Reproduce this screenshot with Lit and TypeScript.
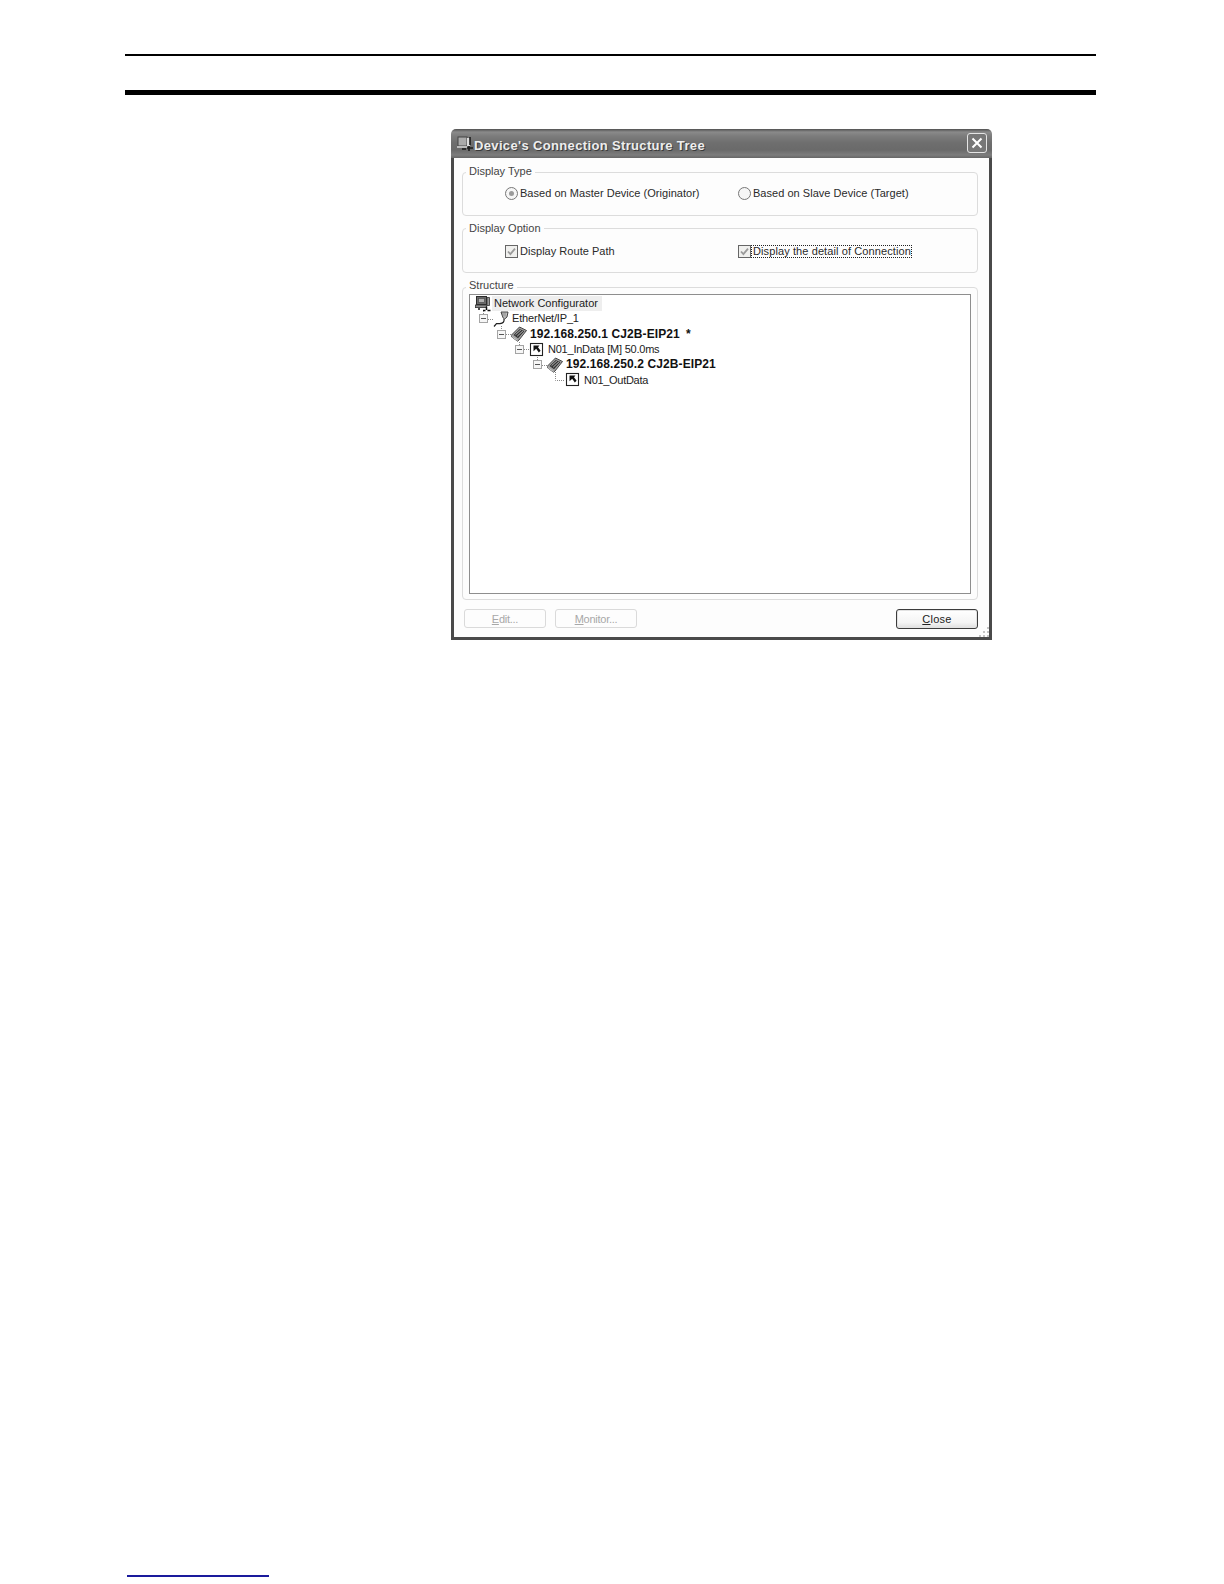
import { LitElement, html, css, svg } from "lit";
import { customElement } from "lit/decorators.js";

const icons = {
  network: svg`<rect x="1.5" y="0.5" width="10" height="8" fill="#6a6a6a" stroke="#2c2c2c"/><rect x="3.5" y="2.5" width="6" height="4" fill="#b4b4b4" stroke="#444" stroke-width=".6"/><rect x="0.5" y="9" width="11" height="2.6" fill="#8e8e8e" stroke="#333" stroke-width=".8"/><path d="M12 1.5h2.5v8H12z" fill="#999" stroke="#333" stroke-width=".8"/><path d="M11.5 10.5v3.5M8 14.5h2.5M12.5 14.5h3M4 12v2" stroke="#111" stroke-width="1.5"/>`,
  ethernet: svg`<path d="M8 1h7l-1 5-2.3 2-1.7-1.2z" fill="#c0c0c0" stroke="#333" stroke-width=".9"/><path d="M11 8c.5 3-1 4.2-4 4.6H3.5L1 15.5" fill="none" stroke="#222" stroke-width="1.2"/><path d="M10 2v3.5M12 2v3.5" stroke="#777" stroke-width=".7"/>`,
  device: svg`<path d="M0 9.5 8.5 1l7 3.5-7.5 9.5-1.5 1.2-6-4.5z" fill="#a4a4a4" stroke="#333" stroke-width=".9"/><path d="M2.5 9 9 2.7l4.5 2.3L7 12.2z" fill="#333"/><path d="M4.5 8.7l6-5.4M6.2 10.2l6-5.6" stroke="#dcdcdc" stroke-width=".8"/><path d="M.8 10.6l5.7 4.1" stroke="#eee" stroke-width=".7"/>`,
  connection: svg`<rect x="1.5" y="1.5" width="12" height="12" fill="#fff" stroke="#222" stroke-width="1.1"/><path d="M4.5 3.5H10.5L9 5.2l2.6 3.6-1.8 1.6-2.6-3.6-2.7 2.4z" fill="#111"/>`,
};

const rows: { level: number; icon: keyof typeof icons; text: string; bold?: boolean; expander?: boolean; selected?: boolean; spacing: number }[] = [
  { level: 0, icon: "network", text: "Network Configurator", selected: true, spacing: 0 },
  { level: 1, icon: "ethernet", text: "EtherNet/IP_1", expander: true, spacing: -0.18 },
  { level: 2, icon: "device", text: "192.168.250.1 CJ2B-EIP21\u2002*", bold: true, expander: true, spacing: 0.1 },
  { level: 3, icon: "connection", text: "N01_InData [M] 50.0ms", expander: true, spacing: -0.23 },
  { level: 4, icon: "device", text: "192.168.250.2 CJ2B-EIP21", bold: true, expander: true, spacing: 0.1 },
  { level: 5, icon: "connection", text: "N01_OutData", spacing: -0.3 },
];

@customElement("app-root")
export class AppRoot extends LitElement {
  static styles = css`
    :host { display: block; width: 1224px; height: 1584px; background: #fff; font-family: "Liberation Sans", Arial, sans-serif; font-size: 11px; color: #2a2a2a; overflow: hidden; }
    .page { display: flex; flex-direction: column; padding-top: 54px; }
    .rule-thin { margin-left: 125px; width: 971px; height: 2px; background: #000; }
    .rule-thick { margin: 34px 0 0 125px; width: 971px; height: 5px; background: #000; }
    .window { position: relative; margin: 34px 0 0 451px; width: 541px; height: 511px; box-sizing: border-box; display: flex; flex-direction: column; background: #fdfdfd; border-radius: 5px 5px 0 0; }
    .title { height: 29px; flex: none; box-sizing: border-box; display: flex; align-items: center; padding: 3px 5px 0 5px; border-radius: 5px 5px 0 0; background: linear-gradient(#505050 0, #8a8a8a 3px, #7c7c7c 7px, #6e6e6e 14px, #6a6a6a 21px, #7d7d7d 26px, #666 29px); }
    .title .logo { width: 18px; height: 18px; flex: none; margin-top: -3px; }
    .title .text { font-size: 13px; font-weight: 700; letter-spacing: .35px; color: #eeeeee; text-shadow: 1px 1px 0 #3a3a3a; white-space: nowrap; flex: 1; }
    .close { width: 20px; height: 20px; box-sizing: border-box; border: 1px solid #e4e4e4; border-radius: 3px; background: #777; display: flex; align-items: center; justify-content: center; margin-top: -4px; }
    .body { flex: 1; min-height: 0; display: flex; flex-direction: column; border: solid #4a4a4a; border-width: 0 3px 3px; padding: 14px 11px 0 8px; }
    .group { position: relative; box-sizing: border-box; border: 1px solid #dcdcdc; border-radius: 4px; flex: none; }
    .g1 { height: 44px; padding: 13.5px 0 0 42px; }
    .g2 { height: 45px; margin-top: 12px; padding: 15.5px 0 0 42px; }
    .g3 { height: 313px; margin-top: 14px; padding: 6px 6px 5px 6px; display: flex; }
    .legend { position: absolute; top: -7px; left: 3px; padding: 0 3px; background: #fdfdfd; line-height: 13px; font-size: 11px; color: #444; }
    .g1 .legend { top: -8px; }
    .g3 .legend { top: -9px; }
    .opts { display: grid; grid-template-columns: 233px 1fr; }
    .opt { display: flex; align-items: center; height: 13px; white-space: nowrap; letter-spacing: .03px; }
    .opt svg { flex: none; width: 13px; height: 13px; }
    .opt .lbl { margin-left: 2px; }
    .opt .focus { outline: 1px dotted #222; outline-offset: 0; margin-left: 1px; padding: 0 0 0 1px; line-height: 11px; letter-spacing: .1px; }
    .tree { position: relative; flex: 1; box-sizing: border-box; border: 1px solid #8e8e8e; background: #fff; padding-top: 1px; }
    .lines { position: absolute; inset: 0; width: 100%; height: 100%; pointer-events: none; }
    .row { position: relative; height: 15.33px; display: flex; align-items: center; white-space: nowrap; color: #222; }
    .exp { width: 9px; height: 9px; margin-left: -14px; margin-right: 5px; flex: none; box-sizing: border-box; border: 1px solid #a4a4a4; background: #f6f6f6; display: flex; align-items: center; justify-content: center; }
    .exp i { display: block; width: 5px; height: 1px; background: #555; }
    .ic { width: 16px; height: 16px; flex: none; }
    .label { margin-left: 3.5px; line-height: 15px; }
    .selected { background: #eeeeee; margin-left: 1.5px; padding: 0 4px 0 2px; }
    .bold { font-weight: 700; font-size: 12px; color: #111; }
    .foot { display: flex; margin-top: 9px; padding-left: 2px; }
    .btn { height: 19px; width: 82px; box-sizing: border-box; border: 1px solid #dadada; border-radius: 3px; display: flex; align-items: center; justify-content: center; color: #a8a8a8; letter-spacing: -.25px; }
    .btn + .btn { margin-left: 9px; }
    .btn.primary { margin-left: auto; height: 20px; width: 82px; border-color: #3c3c3c; color: #222; letter-spacing: .25px; background: linear-gradient(#fff, #f4f4f4 70%, #dedede); box-shadow: inset 0 0 0 1px #e2e2e2; }
    .grip { position: absolute; right: 3px; bottom: 3px; width: 10px; height: 10px; }
    .blue { margin: 935px 0 0 127px; width: 142px; height: 2px; background: #1a1a9c; }
  `;

  private check() {
    return html`<svg viewBox="0 0 13 13"><rect x=".5" y=".5" width="12" height="12" fill="#f0f0ee" stroke="#666"/><path d="M3 6.5l2.4 2.6L10 3.6" fill="none" stroke="#9a9a9a" stroke-width="1.8"/></svg>`;
  }

  private radio(on: boolean) {
    return html`<svg viewBox="0 0 13 13"><circle cx="6.5" cy="6.5" r="6" fill="#f6f6f6" stroke="#777"/>${on ? svg`<circle cx="6.5" cy="6.5" r="2.5" fill="#9a9a9a"/>` : ""}</svg>`;
  }

  render() {
    return html`
      <div class="page">
        <div class="rule-thin"></div>
        <div class="rule-thick"></div>
        <div class="window">
          <div class="title">
            <svg class="logo" viewBox="0 0 18 18"><rect x="2" y="2" width="9" height="9" fill="#aaa" stroke="#444"/><rect x="11" y="3" width="3" height="8" fill="#ddd"/><path d="M14 2v8M11 13h6M6 14h4M13 11v5" stroke="#1c1c1c" stroke-width="1.6"/><rect x="1" y="11" width="10" height="2" fill="#bbb"/></svg>
            <span class="text">Device's Connection Structure Tree</span>
            <div class="close"><svg width="12" height="12" viewBox="0 0 12 12"><path d="M1.5 1.5l9 9M10.5 1.5l-9 9" stroke="#fff" stroke-width="2"/></svg></div>
          </div>
          <div class="body">
            <div class="group g1">
              <span class="legend">Display Type</span>
              <div class="opts">
                <div class="opt">${this.radio(true)}<span class="lbl">Based on Master Device (Originator)</span></div>
                <div class="opt">${this.radio(false)}<span class="lbl">Based on Slave Device (Target)</span></div>
              </div>
            </div>
            <div class="group g2">
              <span class="legend">Display Option</span>
              <div class="opts">
                <div class="opt">${this.check()}<span class="lbl">Display Route Path</span></div>
                <div class="opt">${this.check()}<span class="focus">Display the detail of Connection</span></div>
              </div>
            </div>
            <div class="group g3">
              <span class="legend">Structure</span>
              <div class="tree">
                ${rows.map((r) => html`
                  <div class="row" style="padding-left:${4.5 + r.level * 18}px;letter-spacing:${r.spacing}px">
                    ${r.expander ? html`<span class="exp"><i></i></span>` : ""}
                    <svg class="ic" viewBox="0 0 16 16">${icons[r.icon]}</svg>
                    <span class="label ${r.selected ? "selected" : ""} ${r.bold ? "bold" : ""}">${r.text}</span>
                  </div>`)}
                <svg class="lines">
                  <path d="M13.5 16v4M18 24.5h5M31.5 31v4M36 39.5h5M49.5 47v3M54 54.5h5M67.5 62v4M72 70.5h5M85.5 77v8.5H95" fill="none" stroke="#8a8a8a" stroke-dasharray="1 1"/>
                </svg>
              </div>
            </div>
            <div class="foot">
              <div class="btn"><span><u>E</u>dit...</span></div>
              <div class="btn"><span><u>M</u>onitor...</span></div>
              <div class="btn primary"><span><u>C</u>lose</span></div>
            </div>
          </div>
          <svg class="grip" viewBox="0 0 10 10"><path d="M8 0h2v2H8zM4 4h2v2H4zM8 4h2v2H8zM0 8h2v2H0zM4 8h2v2H4zM8 8h2v2H8z" fill="#c4c4c4"/></svg>
        </div>
        <div class="blue"></div>
      </div>
    `;
  }
}
